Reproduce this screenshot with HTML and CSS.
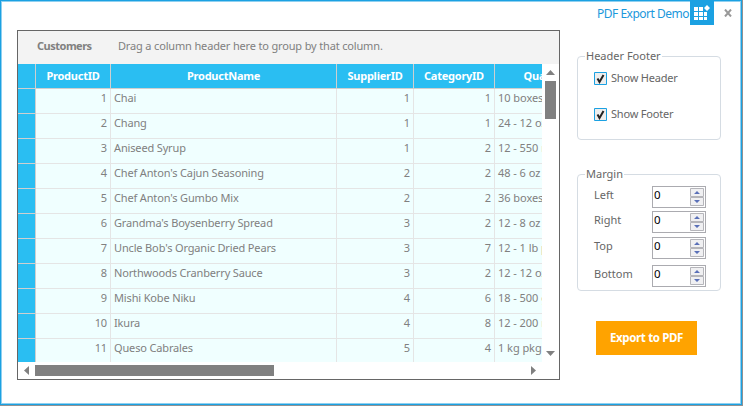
FILE: index.html
```html
<!DOCTYPE html>
<html lang="en">
<head>
<meta charset="utf-8">
<title>PDF Export Demo</title>
<link rel="stylesheet" href="styles.css">
</head>
<body>
<div class="window">
  <header class="titlebar">
    <span class="title">PDF Export Demo</span>
    <svg class="logo" width="24" height="24" viewBox="0 0 24 24"><path fill="#1ba1e2" d="M0 0h24v24H0z"/><path fill="#fff" d="M4 6h4v4H4zM9 6h4v4H9zM4 11h4v4H4zM9 11h4v4H9zM14 11h3v4h-3zM4 16h4v3H4zM9 16h4v3H9zM14 16h3v3h-3zM17 4l3 3-3 3-3-3z"/></svg>
    <svg class="close" width="8" height="8" viewBox="0 0 8 8"><path d="M1 .5l6 7M7 .5l-6 7" stroke="#999" stroke-width="2"/></svg>
  </header>
  <main class="content">
    <section class="grid">
      <div class="groupbar"><b>Customers</b><span>Drag a column header here to group by that column.</span></div>
      <div class="body">
        <div class="viewport">
          <div class="row head"><i></i><span>ProductID</span><span>ProductName</span><span>SupplierID</span><span>CategoryID</span><span>QuantityPerUnit</span></div>
          <div class="row"><i></i><span>1</span><span>Chai</span><span>1</span><span>1</span><span>10 boxes x 20 bags</span></div>
          <div class="row"><i></i><span>2</span><span>Chang</span><span>1</span><span>1</span><span>24 - 12 oz bottles</span></div>
          <div class="row"><i></i><span>3</span><span>Aniseed Syrup</span><span>1</span><span>2</span><span>12 - 550 ml bottles</span></div>
          <div class="row"><i></i><span>4</span><span>Chef Anton's Cajun Seasoning</span><span>2</span><span>2</span><span>48 - 6 oz jars</span></div>
          <div class="row"><i></i><span>5</span><span>Chef Anton's Gumbo Mix</span><span>2</span><span>2</span><span>36 boxes</span></div>
          <div class="row"><i></i><span>6</span><span>Grandma's Boysenberry Spread</span><span>3</span><span>2</span><span>12 - 8 oz jars</span></div>
          <div class="row"><i></i><span>7</span><span>Uncle Bob's Organic Dried Pears</span><span>3</span><span>7</span><span>12 - 1 lb pkgs.</span></div>
          <div class="row"><i></i><span>8</span><span>Northwoods Cranberry Sauce</span><span>3</span><span>2</span><span>12 - 12 oz jars</span></div>
          <div class="row"><i></i><span>9</span><span>Mishi Kobe Niku</span><span>4</span><span>6</span><span>18 - 500 g pkgs.</span></div>
          <div class="row"><i></i><span>10</span><span>Ikura</span><span>4</span><span>8</span><span>12 - 200 ml jars</span></div>
          <div class="row"><i></i><span>11</span><span>Queso Cabrales</span><span>5</span><span>4</span><span>1 kg pkg.</span></div>
        </div>
        <div class="vscroll">
          <svg width="9" height="5" viewBox="0 0 9 5"><path d="M4.5 0L9 5H0z"/></svg>
          <div class="vthumb"></div>
          <svg class="down" width="9" height="5" viewBox="0 0 9 5"><path d="M0 0h9L4.5 5z"/></svg>
        </div>
      </div>
      <div class="hscroll">
        <svg width="5" height="9" viewBox="0 0 5 9"><path d="M5 0v9L0 4.500z"/></svg>
        <div class="hthumb"></div>
        <svg class="right" width="5" height="9" viewBox="0 0 5 9"><path d="M0 0v9l5-4.500z"/></svg>
      </div>
    </section>
    <aside class="side">
      <fieldset class="options">
        <legend>Header Footer</legend>
        <label class="check"><svg width="13" height="13" viewBox="0 0 13 13"><path fill="#eee" stroke="#1ba1e2" d="M.5.5h12v12H.5z"/><path fill="none" stroke="#222" stroke-width="2" d="M3.500 6.500l2 3.500L9.500 3"/></svg><span>Show Header</span></label>
        <label class="check"><svg width="13" height="13" viewBox="0 0 13 13"><path fill="#eee" stroke="#1ba1e2" d="M.5.5h12v12H.5z"/><path fill="none" stroke="#222" stroke-width="2" d="M3.500 6.500l2 3.500L9.500 3"/></svg><span>Show Footer</span></label>
      </fieldset>
      <fieldset class="margins">
        <legend>Margin</legend>
        <div class="field left"><span>Left</span><div class="spin"><b>0</b><svg width="14" height="18" viewBox="0 0 14 18"><path fill="#f0f0f2" stroke="#b5b5ba" d="M.5.5h13v8H.5zM.5 9.500h13v8H.5z"/><path fill="#5a70b8" d="M7 3l3 3H4zM4 12h6l-3 3z"/></svg></div></div>
        <div class="field"><span>Right</span><div class="spin"><b>0</b><svg width="14" height="18" viewBox="0 0 14 18"><path fill="#f0f0f2" stroke="#b5b5ba" d="M.5.5h13v8H.5zM.5 9.500h13v8H.5z"/><path fill="#5a70b8" d="M7 3l3 3H4zM4 12h6l-3 3z"/></svg></div></div>
        <div class="field top"><span>Top</span><div class="spin"><b>0</b><svg width="14" height="18" viewBox="0 0 14 18"><path fill="#f0f0f2" stroke="#b5b5ba" d="M.5.5h13v8H.5zM.5 9.500h13v8H.5z"/><path fill="#5a70b8" d="M7 3l3 3H4zM4 12h6l-3 3z"/></svg></div></div>
        <div class="field bottom"><span>Bottom</span><div class="spin"><b>0</b><svg width="14" height="18" viewBox="0 0 14 18"><path fill="#f0f0f2" stroke="#b5b5ba" d="M.5.5h13v8H.5zM.5 9.500h13v8H.5z"/><path fill="#5a70b8" d="M7 3l3 3H4zM4 12h6l-3 3z"/></svg></div></div>
      </fieldset>
      <button class="export">Export to PDF</button>
    </aside>
  </main>
</div>
</body>
</html>
```
FILE: styles.css
```css
* { box-sizing: border-box; }
body {
  margin: 0;
  width: 743px;
  height: 406px;
  overflow: hidden;
  background: #929292;
  font: 11px/14px "Noto Sans", "Open Sans", sans-serif;
  color: #666;
}
svg { display: block; flex: none; }
.window {
  width: 742px;
  height: 405px;
  background: #fff;
  border: 1px solid #1ba1e2;
  box-shadow: inset 0 0 0 1px #8fd0f0;
}
.titlebar {
  display: flex;
  justify-content: flex-end;
  height: 29px;
  padding-right: 9px;
}
.title { margin: 6px 1px 0 0; font-size: 12px; color: #1b98dc; letter-spacing: -.5px; }
.close { margin: 8px 0 0 10px; }
.content { display: flex; padding-left: 16px; }
.grid {
  width: 543px;
  height: 350px;
  border: 1px solid #666;
  background: #fff;
  color: #808080;
}
.groupbar {
  display: flex;
  height: 33px;
  padding: 8px 0 0 19px;
  background: #f3f3f3;
  letter-spacing: -.16px;
}
.groupbar b { width: 81px; letter-spacing: -.5px; }
.body { display: flex; height: 298px; }
.viewport { width: 524px; height: 298px; overflow: hidden; }
.row {
  display: grid;
  grid-template-columns: 18px 75px 226px 77px 81px 145px;
  width: 622px;
  height: 25px;
}
.row > * { border-right: 1px solid #e5e5e5; border-bottom: 1px solid #e5e5e5; }
.row span {
  padding: 2px 3px 0;
  background: #f0ffff;
  text-align: right;
  white-space: nowrap;
  letter-spacing: -.15px;
}
.row span:nth-child(3), .row span:nth-child(6) { text-align: left; }
.row span:nth-child(6) { letter-spacing: -.05px; }
.row i, .row.head span { background: #2abef2; border-color: #cfcfcf; }
.row.head span, .row.head span:nth-child(n) {
  padding-top: 5px;
  text-align: center;
  font-weight: 700;
  color: #fff;
  letter-spacing: -.25px;
}
.vscroll { display: flex; flex-direction: column; align-items: center; width: 17px; padding-top: 6px; }
.vthumb { width: 11px; height: 38px; margin-top: 6px; background: #808080; }
.down { margin-top: auto; margin-bottom: 6px; }
.grid path { fill: #808080; }
.hscroll { display: flex; align-items: center; height: 17px; padding: 0 23px 0 6px; }
.hthumb { width: 239px; height: 11px; margin-left: 6px; background: #808080; }
.right { margin-left: auto; }
.side { width: 144px; margin-left: 17px; padding-top: 19px; }
fieldset {
  min-width: 0;
  margin: 0;
  padding: 0 0 0 16px;
  border: 1px solid #d5dce3;
  border-radius: 4px;
}
legend { height: 14px; margin-left: -9px; padding: 0 1px; }
.options { height: 91px; }
.check { display: flex; gap: 4px; height: 14px; margin-top: 8px; letter-spacing: -.2px; }
.check svg { margin-top: 1px; }
.check + .check { margin-top: 22px; }
.margins { height: 124px; margin-top: 27px; }
.field { display: flex; height: 22px; margin-top: 3px; }
.field > span { width: 58px; padding-top: 2px; }
.left { margin-top: 5px; }
.top { margin-top: 4px; }
.bottom { margin-top: 6px; }
.spin {
  display: flex;
  justify-content: space-between;
  width: 54px;
  height: 22px;
  padding: 1px 1px 0 1px;
  border: 1px solid #ababb0;
}
.spin b { font-weight: 400; font-size: 11.500px; color: #000; }
.export {
  display: block;
  width: 101px;
  height: 34px;
  margin: 30px 0 0 19px;
  padding: 0;
  border: 0;
  background: #ffa300;
  color: #fff;
  font: 700 11.500px/34px "Noto Sans", "Open Sans", sans-serif;
  letter-spacing: -.35px;
}
```
